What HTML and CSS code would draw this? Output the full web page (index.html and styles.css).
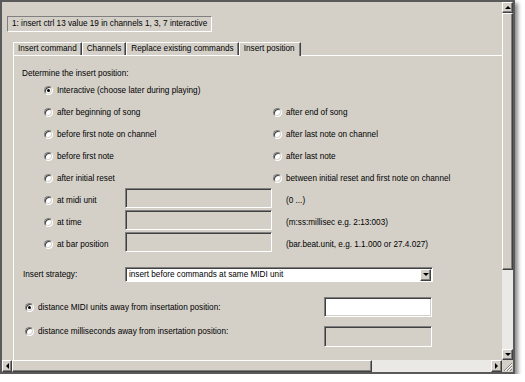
FILE: index.html
```html
<!DOCTYPE html>
<html lang="en">
<head>
    <meta charset="UTF-8">
    <title>Insert position</title>
    <link rel="stylesheet" href="styles.css">
</head>
<body>
    <div class="window">
        <div class="view">
            <div class="title">1: insert ctrl 13 value 19 in channels 1, 3, 7 interactive</div>

            <div class="tabs">
                <div class="tab">Insert command</div>
                <div class="tab">Channels</div>
                <div class="tab">Replace existing commands</div>
                <div class="tab active">Insert position</div>
            </div>

            <div class="panel">
                <div class="heading">Determine the insert position:</div>

                <div class="positions">
                    <label class="opt wide"><span class="radio checked"></span>Interactive (choose later during playing)</label>
                    <span class="right"></span>

                    <label class="opt wide"><span class="radio"></span>after beginning of song</label>
                    <label class="opt right"><span class="radio"></span>after end of song</label>

                    <label class="opt wide"><span class="radio"></span>before first note on channel</label>
                    <label class="opt right"><span class="radio"></span>after last note on channel</label>

                    <label class="opt wide"><span class="radio"></span>before first note</label>
                    <label class="opt right"><span class="radio"></span>after last note</label>

                    <label class="opt wide"><span class="radio"></span>after initial reset</label>
                    <label class="opt right"><span class="radio"></span>between initial reset and first note on channel</label>

                    <label class="opt"><span class="radio"></span>at midi unit</label>
                    <div class="edit disabled"></div>
                    <div class="hint">(0 ...)</div>

                    <label class="opt"><span class="radio"></span>at time</label>
                    <div class="edit disabled"></div>
                    <div class="hint">(m:ss:millisec e.g. 2:13:003)</div>

                    <label class="opt"><span class="radio"></span>at bar position</label>
                    <div class="edit disabled"></div>
                    <div class="hint">(bar.beat.unit, e.g. 1.1.000 or 27.4.027)</div>
                </div>

                <div class="strategy">
                    <span class="strategy-label">Insert strategy:</span>
                    <div class="combo">
                        <span class="combo-text">insert before commands at same MIDI unit</span>
                        <span class="btn combo-btn"><i class="arrow down"></i></span>
                    </div>
                </div>

                <div class="distance">
                    <label class="opt first"><span class="radio checked"></span>distance MIDI units away from insertation position:</label>
                    <div class="edit first-box"></div>
                    <label class="opt second"><span class="radio"></span>distance milliseconds away from insertation position:</label>
                    <div class="edit disabled second-box"></div>
                </div>
            </div>
        </div>

        <div class="vscroll">
            <span class="btn sbtn"><i class="arrow up"></i></span>
            <span class="thumb vthumb"></span>
            <span class="track"></span>
            <span class="btn sbtn"><i class="arrow down"></i></span>
        </div>

        <div class="hscroll">
            <span class="btn sbtn"><i class="arrow left"></i></span>
            <span class="thumb hthumb"></span>
            <span class="track"></span>
            <span class="btn sbtn"><i class="arrow right"></i></span>
        </div>

        <div class="grip">
            <svg width="11" height="12" viewBox="0 0 11 12">
                <path d="M10 3 L2 11 M10 6 L5 11 M10 9 L8 11" stroke="#808080" stroke-width="1"/>
                <path d="M10 4 L3 11 M10 7 L6 11" stroke="#fff" stroke-width="1"/>
            </svg>
        </div>
    </div>
</body>
</html>
```

FILE: styles.css
```css
* {
    box-sizing: border-box;
}

body {
    margin: 0;
    background-color: #fff;
    font-family: "Liberation Sans", Arial, sans-serif;
    font-size: 8.2px;
    color: #000;
}

.window {
    width: 515px;
    height: 374px;
    border: 2px solid #5a5a5a;
    background-color: #d4d0c8;
    box-shadow: 3px 3px 4px rgba(0,0,0,0.45);
    display: grid;
    grid-template-columns: 1fr 11px;
    grid-template-rows: 1fr 12px;
}

.view {
    overflow: hidden;
    min-width: 0;
    min-height: 0;
}

.title {
    margin: 14px 0 0 5px;
    width: 205px;
    height: 16px;
    padding-left: 4px;
    line-height: 14px;
    white-space: nowrap;
    border: 1px solid;
    border-color: #808080 #fff #fff #808080;
}

/* tabs */
.tabs {
    display: flex;
    margin: 10px 0 0 11px;
    height: 13px;
    position: relative;
    z-index: 1;
}

.tab {
    height: 13px;
    padding: 0 4px;
    line-height: 12px;
    white-space: nowrap;
    border-top: 1px solid #fff;
    border-left: 1px solid #fff;
    border-right: 1px solid #404040;
    box-shadow: inset -1px 0 0 #808080;
}

.tab.active {
    height: 14px;
    padding: 0 5px 0 4px;
    background-color: #d4d0c8;
}

.panel {
    margin-left: 11px;
    width: 520px;
    height: 320px;
    border-top: 1px solid #fff;
    border-left: 1px solid #fff;
    padding: 13px 0 0 8px;
}

.heading {
    height: 10px;
    line-height: 10px;
    white-space: nowrap;
}

/* radio buttons */
.opt {
    display: flex;
    align-items: center;
    gap: 4px;
    white-space: nowrap;
    line-height: 11px;
}

.radio {
    position: relative;
    flex: none;
    width: 9px;
    height: 9px;
    border-radius: 50%;
    background-color: #fff;
    border: 1px solid;
    border-color: #808080 #fff #fff #808080;
    box-shadow: inset 1px 1px 0 #404040, inset -1px -1px 0 #d4d0c8;
}

.radio.checked::after {
    content: "";
    position: absolute;
    left: 2px;
    top: 2px;
    width: 3px;
    height: 3px;
    border-radius: 50%;
    background-color: #000;
}

.positions {
    display: grid;
    grid-template-columns: 81px 148px 1fr;
    grid-auto-rows: 22px;
    margin-left: 22px;
}

.wide {
    grid-column: 1 / 3;
}

.right {
    grid-column: 3;
}

.hint {
    grid-column: 3;
    padding-left: 13px;
    align-self: center;
    white-space: nowrap;
}

/* sunken fields */
.edit {
    background-color: #fff;
    border: 1px solid;
    border-color: #808080 #fff #fff #808080;
    box-shadow: inset 1px 1px 0 #404040, inset -1px -1px 0 #d4d0c8;
}

.edit.disabled {
    background-color: #d4d0c8;
}

.positions .edit {
    width: 147px;
    height: 20px;
    align-self: center;
    margin-bottom: 4px;
}

.strategy {
    display: grid;
    grid-template-columns: 103px 308px;
    align-items: center;
    margin-top: 12px;
    height: 15px;
}

.strategy-label {
    padding-left: 1px;
    white-space: nowrap;
}

.combo {
    display: flex;
    align-items: center;
    height: 15px;
    background-color: #fff;
    border: 1px solid;
    border-color: #808080 #fff #fff #808080;
    box-shadow: inset 1px 1px 0 #404040;
    padding: 1px 1px 1px 3px;
}

.combo-text {
    flex: 1;
    white-space: nowrap;
}

.combo-btn {
    width: 11px;
    height: 12px;
}

.distance {
    display: grid;
    grid-template-columns: 302px 108px;
    grid-template-rows: 29px 21px;
    margin-top: 15px;
}

.distance .opt {
    padding-left: 3px;
    align-self: start;
}

.distance .first {
    margin-top: 5px;
}

.distance .second {
    margin-top: 0;
}

.first-box {
    height: 20px;
}

.second-box {
    height: 21px;
}

/* scrollbars */
.btn {
    display: flex;
    align-items: center;
    justify-content: center;
    flex: none;
    background-color: #d4d0c8;
    border: 1px solid;
    border-color: #fff #404040 #404040 #fff;
    box-shadow: inset -1px -1px 0 #808080;
}

.arrow {
    width: 0;
    height: 0;
    border: 3px solid transparent;
}

.arrow.up {
    border-bottom-color: #000;
    border-top-width: 0;
}

.arrow.down {
    border-top-color: #000;
    border-bottom-width: 0;
}

.arrow.left {
    border-right-color: #000;
    border-left-width: 0;
}

.arrow.right {
    border-left-color: #000;
    border-right-width: 0;
}

.vscroll {
    display: flex;
    flex-direction: column;
}

.vscroll .sbtn {
    height: 11px;
}

.hscroll {
    display: flex;
}

.hscroll .sbtn {
    width: 10px;
}

.hscroll .sbtn:last-child {
    width: 11px;
}

.thumb {
    flex: none;
    background-color: #d4d0c8;
    border: 1px solid;
    border-color: #fff #404040 #404040 #fff;
    box-shadow: inset -1px -1px 0 #808080;
}

.vthumb {
    height: 257px;
}

.hthumb {
    width: 360px;
}

.track {
    flex: 1;
    background-color: #ebe9e5;
}

.grip {
    background-color: #d4d0c8;
}

.grip svg {
    display: block;
}
```
